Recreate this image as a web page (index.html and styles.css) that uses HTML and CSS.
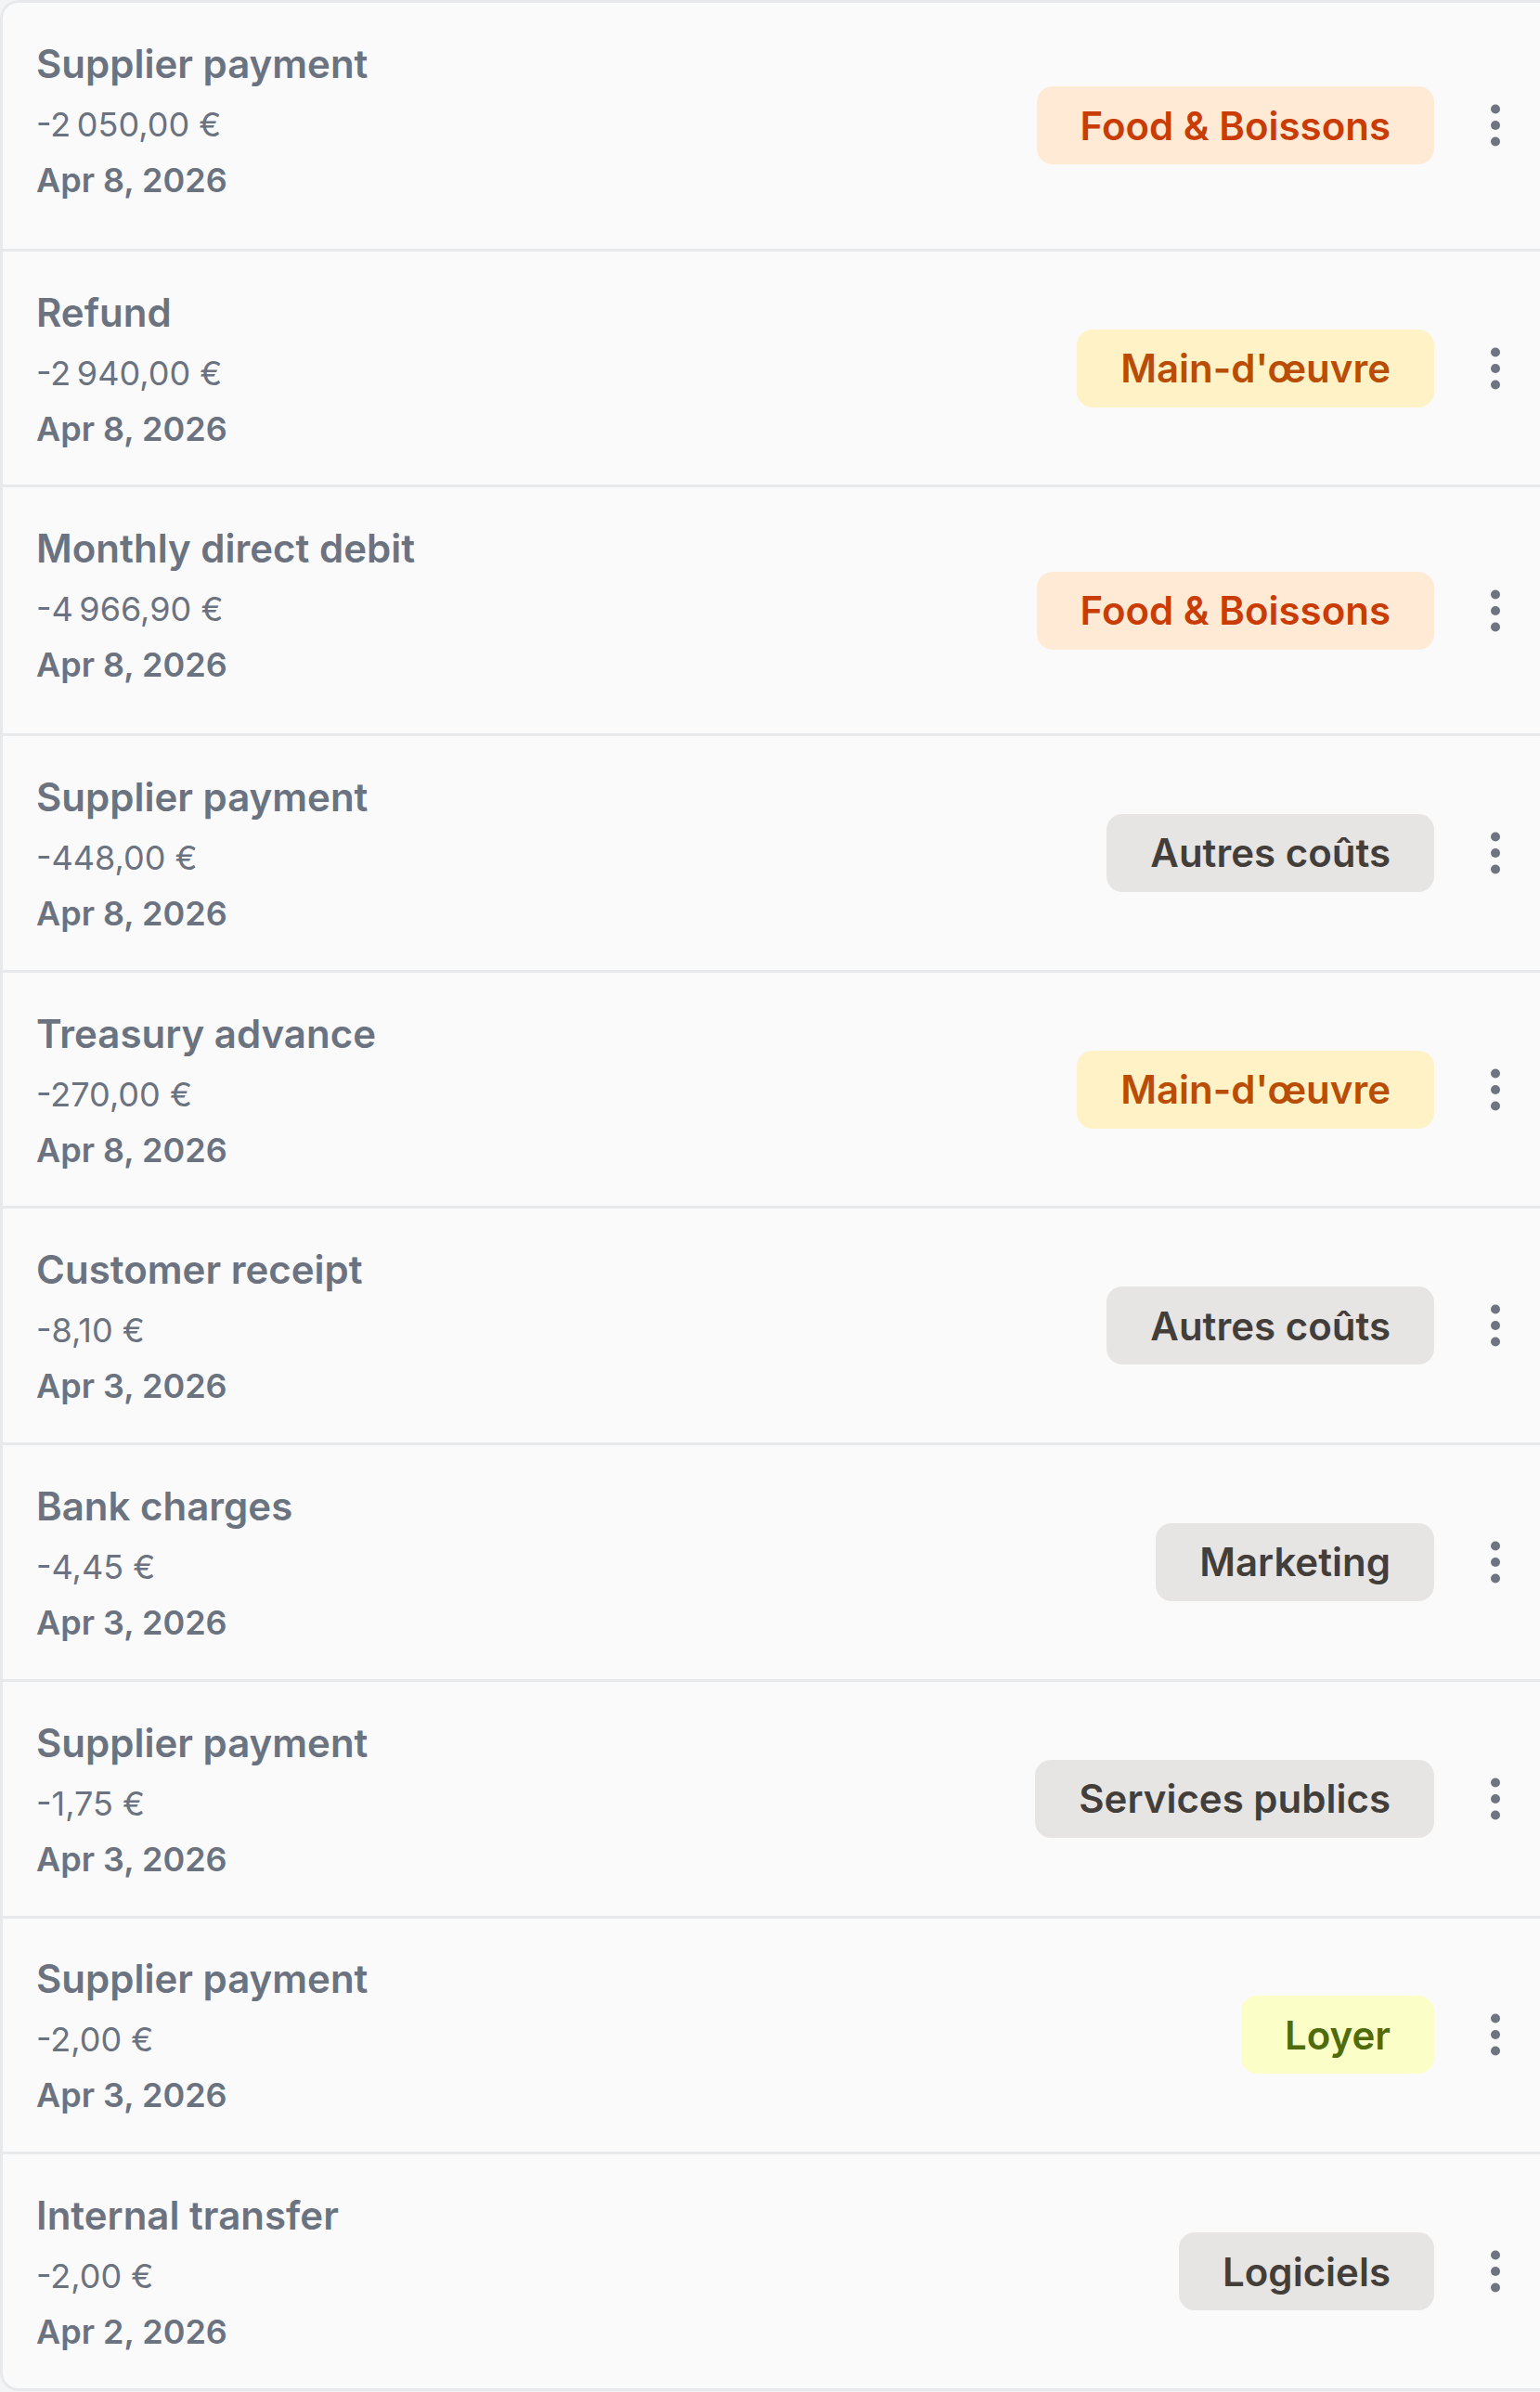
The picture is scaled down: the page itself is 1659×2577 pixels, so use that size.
FILE: index.html
```html
<!DOCTYPE html>
<html lang="fr">
<head>
    <meta charset="UTF-8">
    <title>Transactions</title>
    <link rel="stylesheet" href="styles.css">
</head>
<body>

<div class="card">

    <div class="row row-tall">
        <div class="info">
            <div class="title">Supplier payment</div>
            <div class="amount">-2&#8239;050,00 €</div>
            <div class="date">Apr 8, 2026</div>
        </div>
        <span class="badge food">Food &amp; Boissons</span>
        <button class="more" aria-label="Options">
            <svg width="10" height="46" viewBox="0 0 10 46"><circle cx="5" cy="5.5" r="5"/><circle cx="5" cy="23" r="5"/><circle cx="5" cy="40.5" r="5"/></svg>
        </button>
    </div>

    <div class="row">
        <div class="info">
            <div class="title">Refund</div>
            <div class="amount">-2&#8239;940,00 €</div>
            <div class="date">Apr 8, 2026</div>
        </div>
        <span class="badge labour">Main-d'œuvre</span>
        <button class="more" aria-label="Options">
            <svg width="10" height="46" viewBox="0 0 10 46"><circle cx="5" cy="5.5" r="5"/><circle cx="5" cy="23" r="5"/><circle cx="5" cy="40.5" r="5"/></svg>
        </button>
    </div>

    <div class="row row-tall">
        <div class="info">
            <div class="title">Monthly direct debit</div>
            <div class="amount">-4&#8239;966,90 €</div>
            <div class="date">Apr 8, 2026</div>
        </div>
        <span class="badge food">Food &amp; Boissons</span>
        <button class="more" aria-label="Options">
            <svg width="10" height="46" viewBox="0 0 10 46"><circle cx="5" cy="5.5" r="5"/><circle cx="5" cy="23" r="5"/><circle cx="5" cy="40.5" r="5"/></svg>
        </button>
    </div>

    <div class="row">
        <div class="info">
            <div class="title">Supplier payment</div>
            <div class="amount">-448,00 €</div>
            <div class="date">Apr 8, 2026</div>
        </div>
        <span class="badge other">Autres coûts</span>
        <button class="more" aria-label="Options">
            <svg width="10" height="46" viewBox="0 0 10 46"><circle cx="5" cy="5.5" r="5"/><circle cx="5" cy="23" r="5"/><circle cx="5" cy="40.5" r="5"/></svg>
        </button>
    </div>

    <div class="row">
        <div class="info">
            <div class="title">Treasury advance</div>
            <div class="amount">-270,00 €</div>
            <div class="date">Apr 8, 2026</div>
        </div>
        <span class="badge labour">Main-d'œuvre</span>
        <button class="more" aria-label="Options">
            <svg width="10" height="46" viewBox="0 0 10 46"><circle cx="5" cy="5.5" r="5"/><circle cx="5" cy="23" r="5"/><circle cx="5" cy="40.5" r="5"/></svg>
        </button>
    </div>

    <div class="row">
        <div class="info">
            <div class="title">Customer receipt</div>
            <div class="amount">-8,10 €</div>
            <div class="date">Apr 3, 2026</div>
        </div>
        <span class="badge other">Autres coûts</span>
        <button class="more" aria-label="Options">
            <svg width="10" height="46" viewBox="0 0 10 46"><circle cx="5" cy="5.5" r="5"/><circle cx="5" cy="23" r="5"/><circle cx="5" cy="40.5" r="5"/></svg>
        </button>
    </div>

    <div class="row">
        <div class="info">
            <div class="title">Bank charges</div>
            <div class="amount">-4,45 €</div>
            <div class="date">Apr 3, 2026</div>
        </div>
        <span class="badge other">Marketing</span>
        <button class="more" aria-label="Options">
            <svg width="10" height="46" viewBox="0 0 10 46"><circle cx="5" cy="5.5" r="5"/><circle cx="5" cy="23" r="5"/><circle cx="5" cy="40.5" r="5"/></svg>
        </button>
    </div>

    <div class="row">
        <div class="info">
            <div class="title">Supplier payment</div>
            <div class="amount">-1,75 €</div>
            <div class="date">Apr 3, 2026</div>
        </div>
        <span class="badge other">Services publics</span>
        <button class="more" aria-label="Options">
            <svg width="10" height="46" viewBox="0 0 10 46"><circle cx="5" cy="5.5" r="5"/><circle cx="5" cy="23" r="5"/><circle cx="5" cy="40.5" r="5"/></svg>
        </button>
    </div>

    <div class="row">
        <div class="info">
            <div class="title">Supplier payment</div>
            <div class="amount">-2,00 €</div>
            <div class="date">Apr 3, 2026</div>
        </div>
        <span class="badge rent">Loyer</span>
        <button class="more" aria-label="Options">
            <svg width="10" height="46" viewBox="0 0 10 46"><circle cx="5" cy="5.5" r="5"/><circle cx="5" cy="23" r="5"/><circle cx="5" cy="40.5" r="5"/></svg>
        </button>
    </div>

    <div class="row">
        <div class="info">
            <div class="title">Internal transfer</div>
            <div class="amount">-2,00 €</div>
            <div class="date">Apr 2, 2026</div>
        </div>
        <span class="badge other">Logiciels</span>
        <button class="more" aria-label="Options">
            <svg width="10" height="46" viewBox="0 0 10 46"><circle cx="5" cy="5.5" r="5"/><circle cx="5" cy="23" r="5"/><circle cx="5" cy="40.5" r="5"/></svg>
        </button>
    </div>

</div>

</body>
</html>
```

FILE: styles.css
```css
* {
    box-sizing: border-box;
}

body {
    font-family: Inter, 'Noto Sans', sans-serif;
    background: #f3f4f6;
    margin: 0;
    padding: 0;
    color: #6b7280;
}

.card {
    background-color: #fafafa;
    border: 3px solid #e8e9eb;
    border-right: none;
    border-radius: 20px 0 0 20px;
    overflow: hidden;
}

.row {
    display: flex;
    align-items: center;
    padding: 30.85px 20px 30.85px 36px;
    border-bottom: 3px solid #e8e9eb;
}

.row:last-child {
    border-bottom: none;
}

.info {
    flex: 1;
    min-width: 0;
}

/* these rows carry a little extra room under the date */
.row-tall .info {
    padding-bottom: 13px;
}

.title {
    font-size: 42px;
    line-height: 70px;
    font-weight: 600;
}

.amount {
    font-size: 36px;
    line-height: 60px;
    font-weight: 400;
}

.date {
    font-size: 36px;
    line-height: 60px;
    font-weight: 600;
}

.badge {
    display: inline-flex;
    align-items: center;
    height: 84px;
    padding: 0 47px;
    border-radius: 17px;
    font-size: 42px;
    font-weight: 600;
    white-space: nowrap;
}

.food {
    background-color: #ffebd5;
    color: #c93c06;
}

.labour {
    background-color: #fef2c6;
    color: #b94d05;
}

.other {
    background-color: #e7e5e4;
    color: #433e3a;
}

.rent {
    background-color: #fbfec6;
    color: #4f6b0b;
}

.more {
    display: flex;
    align-items: center;
    justify-content: center;
    width: 56px;
    height: 84px;
    margin-left: 38px;
    padding: 0;
    border: none;
    background: none;
    cursor: pointer;
}

.more svg {
    fill: #6f7580;
}
```
